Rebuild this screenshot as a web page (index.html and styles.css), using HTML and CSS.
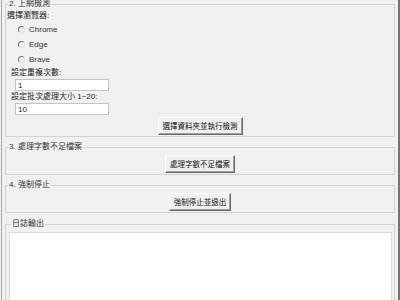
FILE: index.html
```html
<!DOCTYPE html>
<html lang="zh-Hant">
<head>
    <meta charset="UTF-8">
    <meta name="viewport" content="width=device-width, initial-scale=1.0">
    <title>檢測工具</title>
    <link rel="stylesheet" href="styles.css">
</head>
<body>
    <div class="window">
        <fieldset class="group group-check">
            <legend>2. 上網檢測</legend>
            <div class="label first">選擇瀏覽器:</div>
            <div class="radio"><span class="dot"></span><span>Chrome</span></div>
            <div class="radio"><span class="dot"></span><span>Edge</span></div>
            <div class="radio"><span class="dot"></span><span>Brave</span></div>
            <div class="label">設定重複次數:</div>
            <input class="entry" type="text" value="1">
            <div class="label">設定批次處理大小 1~20:</div>
            <input class="entry" type="text" value="10">
            <div class="actions">
                <button class="btn">選擇資料夾並執行檢測</button>
            </div>
        </fieldset>

        <fieldset class="group group-small">
            <legend>3. 處理字數不足檔案</legend>
            <div class="actions">
                <button class="btn">處理字數不足檔案</button>
            </div>
        </fieldset>

        <fieldset class="group group-small">
            <legend>4. 強制停止</legend>
            <div class="actions">
                <button class="btn">強制停止並退出</button>
            </div>
        </fieldset>

        <fieldset class="group group-log">
            <legend>日誌輸出</legend>
            <div class="log"></div>
        </fieldset>
    </div>
</body>
</html>
```

FILE: styles.css
```css
body {
    margin: 0;
    padding: 0;
    background-color: #f0f0f0;
    font-family: "Liberation Sans", "Noto Sans CJK TC", sans-serif;
    font-size: 8px;
    color: #222;
    overflow: hidden;
}
.window {
    margin-left: 1px;
    height: 300px;
    box-sizing: border-box;
    border-left: 1px solid #a8a8a8;
    border-right: 2px solid #747474;
    padding: 0 3px;
    overflow: hidden;
}
.group {
    margin: 6px 0 0;
    padding: 0 0 1px;
    border: 1px solid #d2d2d2;
    min-width: 0;
}
.group legend {
    margin-left: 2px;
    padding: 0 1px;
    line-height: 8px;
    font-size: 8px;
    color: #333;
}
.group-check {
    margin-top: 0;
    padding-top: 2px;
}
.label {
    line-height: 12px;
    margin-left: 5px;
}
.label.first {
    margin-left: 1px;
}
.radio {
    display: flex;
    align-items: center;
    height: 15px;
    margin-left: 12px;
    gap: 4px;
    color: #333;
}
.dot {
    width: 5px;
    height: 5px;
    border: 1px solid;
    border-color: #777 #e4e4e4 #e4e4e4 #777;
    border-radius: 50%;
}
.entry {
    display: block;
    box-sizing: border-box;
    width: 94px;
    height: 12px;
    margin: 0 0 0 9px;
    padding: 0 2px;
    border: 1px solid #c4c4c4;
    background: #fff;
    font-family: "Liberation Sans", sans-serif;
    font-size: 8px;
    color: #222;
    outline: none;
}
.actions {
    display: flex;
    justify-content: center;
}
.group-check .actions {
    margin-top: 2px;
}
.group-small {
    padding-top: 4px;
}
.btn {
    box-sizing: border-box;
    height: 18px;
    padding: 0 4px;
    border: 1px solid;
    border-color: #fff #696969 #696969 #fff;
    box-shadow: inset -1px -1px #a0a0a0;
    background-color: #f0f0f0;
    font-family: "Noto Sans CJK TC", sans-serif;
    font-size: 7.5px;
    line-height: 1;
    color: #111;
}
.group-log {
    margin-top: 7px;
    padding: 4px 2px 0 3px;
}
.log {
    height: 90px;
    background: #fff;
    border: 1px solid #dadada;
}
```
